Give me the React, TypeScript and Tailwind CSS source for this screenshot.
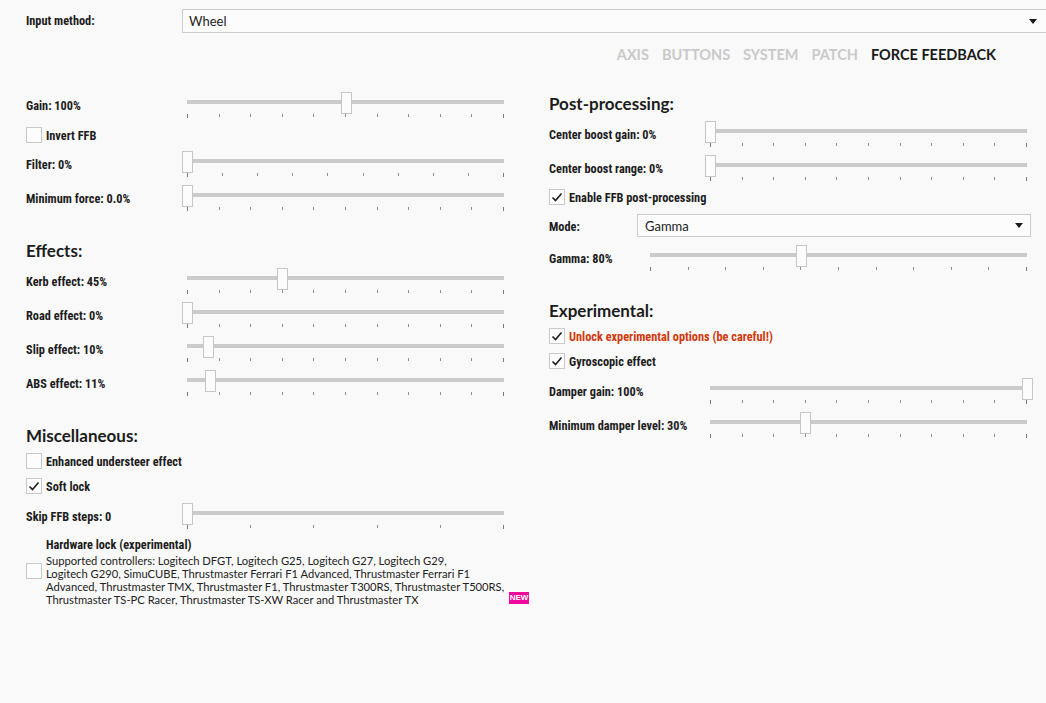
import React from "react";

const LBL = "font-['Liberation_Sans_Narrow','Roboto_Condensed','Liberation_Sans',sans-serif] font-bold text-[12.3px] text-[#1c1c1c]";
const HDR = "font-['Lato',sans-serif] font-bold text-[17px] leading-[22px] h-[20px] text-[#1c1c1c]";

function Slider({ w, value, ticks }: { w: string; value: number; ticks: number }) {
  const arr = Array.from({ length: ticks });
  return (
    <div className={`relative h-[26px] ${w}`}>
      <div className="absolute left-0 right-0 top-[8px] h-[4px] bg-[#cbcbcb]" />
      <div className="absolute left-0 right-0 top-[22px] flex justify-between items-start">
        {arr.map((_, i) => (
          <div
            key={i}
            className={i === 0 || i === ticks - 1 ? "w-px h-[4px] bg-[#7a7a7a]" : "w-px h-[3px] bg-[#8e8e8e]"}
          />
        ))}
      </div>
      <div
        className="absolute top-0 w-[11px] h-[22px] border border-[#c6c6c6] bg-[#fcfcfc]"
        style={{ left: `calc(${value * 100}% - 5px)` }}
      />
    </div>
  );
}

function SliderRow({
  label,
  lw,
  sw,
  value,
  ticks = 11,
  mt = "",
}: {
  label: string;
  lw: string;
  sw: string;
  value: number;
  ticks?: number;
  mt?: string;
}) {
  return (
    <div className={`flex items-start ${mt}`}>
      <div className={`${lw} h-[26px] leading-[28px] whitespace-nowrap shrink-0 ${LBL}`}>{label}</div>
      <Slider w={sw} value={value} ticks={ticks} />
    </div>
  );
}

function Box({ checked }: { checked?: boolean }) {
  return (
    <div className="w-[16px] h-[16px] border border-[#c9c9c9] bg-[#fdfdfd] shrink-0 flex items-center justify-center">
      {checked && (
        <svg width="14" height="14" viewBox="0 0 14 14">
          <polyline points="2.5,7.5 5.5,10.5 11.5,3.5" fill="none" stroke="#1e1e1e" strokeWidth="1.6" />
        </svg>
      )}
    </div>
  );
}

function Check({ label, checked, mt = "", red }: { label: string; checked?: boolean; mt?: string; red?: boolean }) {
  return (
    <div className={`flex items-center gap-[4px] h-[16px] ${mt}`}>
      <Box checked={checked} />
      <span className={`block h-[16px] leading-[18px] whitespace-nowrap ${LBL} ${red ? "!text-[#d0380c]" : ""}`}>{label}</span>
    </div>
  );
}

function Arrow() {
  return (
    <svg width="8" height="5" viewBox="0 0 8 5">
      <polygon points="0,0 8,0 4,5" fill="#1a1a1a" />
    </svg>
  );
}

export default function App() {
  return (
    <div className="w-[1046px] h-[703px] overflow-hidden bg-[#f9f9f9] text-[#1c1c1c]">
      {/* Input method */}
      <div className="flex items-center pt-[9px] pl-[26px]">
        <div className={`w-[156px] shrink-0 ${LBL}`}>Input method:</div>
        <div className="w-[870px] shrink-0 h-[24px] border border-[#cccccc] bg-[#fcfcfc] flex items-center justify-between pl-[6px] pr-[14px]">
          <span className="block h-[22px] leading-[23px] font-['Lato',sans-serif] text-[13px] text-[#222]">Wheel</span>
          <Arrow />
        </div>
      </div>

      {/* Tabs */}
      <div className="flex justify-end gap-[13px] pr-[50px] mt-[12px] font-['Lato',sans-serif] font-bold text-[14.5px] leading-[20px]">
        <span className="text-[#c9c9c9]">AXIS</span>
        <span className="text-[#c9c9c9]">BUTTONS</span>
        <span className="text-[#c9c9c9]">SYSTEM</span>
        <span className="text-[#c9c9c9]">PATCH</span>
        <span className="text-[#1a1a1a]">FORCE FEEDBACK</span>
      </div>

      <div className="flex mt-[27px] pl-[26px] gap-[45px]">
        {/* Left column */}
        <div className="flex flex-col w-[478px]">
          <SliderRow label="Gain: 100%" lw="w-[161px]" sw="w-[317px]" value={0.5} />
          <Check label="Invert FFB" mt="mt-[9px]" />
          <SliderRow label="Filter: 0%" lw="w-[161px]" sw="w-[317px]" value={0} ticks={10} mt="mt-[8px]" />
          <SliderRow label="Minimum force: 0.0%" lw="w-[161px]" sw="w-[317px]" value={0} mt="mt-[8px]" />

          <div className={`${HDR} mt-[29px]`}>Effects:</div>
          <SliderRow label="Kerb effect: 45%" lw="w-[161px]" sw="w-[317px]" value={0.3} mt="mt-[8px]" />
          <SliderRow label="Road effect: 0%" lw="w-[161px]" sw="w-[317px]" value={0} mt="mt-[8px]" />
          <SliderRow label="Slip effect: 10%" lw="w-[161px]" sw="w-[317px]" value={0.066} mt="mt-[8px]" />
          <SliderRow label="ABS effect: 11%" lw="w-[161px]" sw="w-[317px]" value={0.073} mt="mt-[8px]" />

          <div className={`${HDR} mt-[29px]`}>Miscellaneous:</div>
          <Check label="Enhanced understeer effect" mt="mt-[8px]" />
          <Check label="Soft lock" checked mt="mt-[9px]" />
          <SliderRow label="Skip FFB steps: 0" lw="w-[161px]" sw="w-[317px]" value={0} ticks={6} mt="mt-[9px]" />

          <div className="flex items-center mt-[7px] w-[510px]">
            <Box />
            <div className="ml-[4px] w-[463px] shrink-0">
              <div className={`h-[16px] leading-[18px] ${LBL}`}>Hardware lock (experimental)</div>
              <div className="mt-[2px] font-['Lato',sans-serif] text-[11.2px] leading-[13px] text-[#222] whitespace-nowrap">
                Supported controllers: Logitech DFGT, Logitech G25, Logitech G27, Logitech G29,
                <br />
                Logitech G290, SimuCUBE, Thrustmaster Ferrari F1 Advanced, Thrustmaster Ferrari F1
                <br />
                Advanced, Thrustmaster TMX, Thrustmaster F1, Thrustmaster T300RS, Thrustmaster T500RS,
                <br />
                Thrustmaster TS-PC Racer, Thrustmaster TS-XW Racer and Thrustmaster TX
              </div>
            </div>
            <div className="self-end mb-[2px] w-[20px] h-[12px] bg-[#f0079b] flex items-center justify-center font-['Liberation_Sans_Narrow','Liberation_Sans',sans-serif] font-bold text-[8px] leading-none text-white">
              NEW
            </div>
          </div>
        </div>

        {/* Right column */}
        <div className="flex flex-col w-[482px] pt-[1px]">
          <div className={HDR}>Post-processing:</div>
          <SliderRow label="Center boost gain: 0%" lw="w-[161px]" sw="w-[317px]" value={0} mt="mt-[8px]" />
          <SliderRow label="Center boost range: 0%" lw="w-[161px]" sw="w-[317px]" value={0} mt="mt-[8px]" />
          <Check label="Enable FFB post-processing" checked mt="mt-[8px]" />
          <div className="flex items-center mt-[9px]">
            <div className={`w-[88px] shrink-0 h-[16px] leading-[18px] ${LBL}`}>Mode:</div>
            <div className="w-[394px] h-[23px] border border-[#cccccc] bg-[#fcfcfc] flex items-center justify-between pl-[7px] pr-[7px]">
              <span className="block h-[21px] leading-[23px] font-['Lato',sans-serif] text-[13px] text-[#222]">Gamma</span>
              <Arrow />
            </div>
          </div>
          <SliderRow label="Gamma: 80%" lw="w-[101px]" sw="w-[377px]" value={0.4} mt="mt-[8px]" />

          <div className={`${HDR} mt-[29px]`}>Experimental:</div>
          <Check label="Unlock experimental options (be careful!)" checked red mt="mt-[8px]" />
          <Check label="Gyroscopic effect" checked mt="mt-[9px]" />
          <SliderRow label="Damper gain: 100%" lw="w-[161px]" sw="w-[317px]" value={1} mt="mt-[9px]" />
          <SliderRow label="Minimum damper level: 30%" lw="w-[161px]" sw="w-[317px]" value={0.3} mt="mt-[8px]" />
        </div>
      </div>
    </div>
  );
}
